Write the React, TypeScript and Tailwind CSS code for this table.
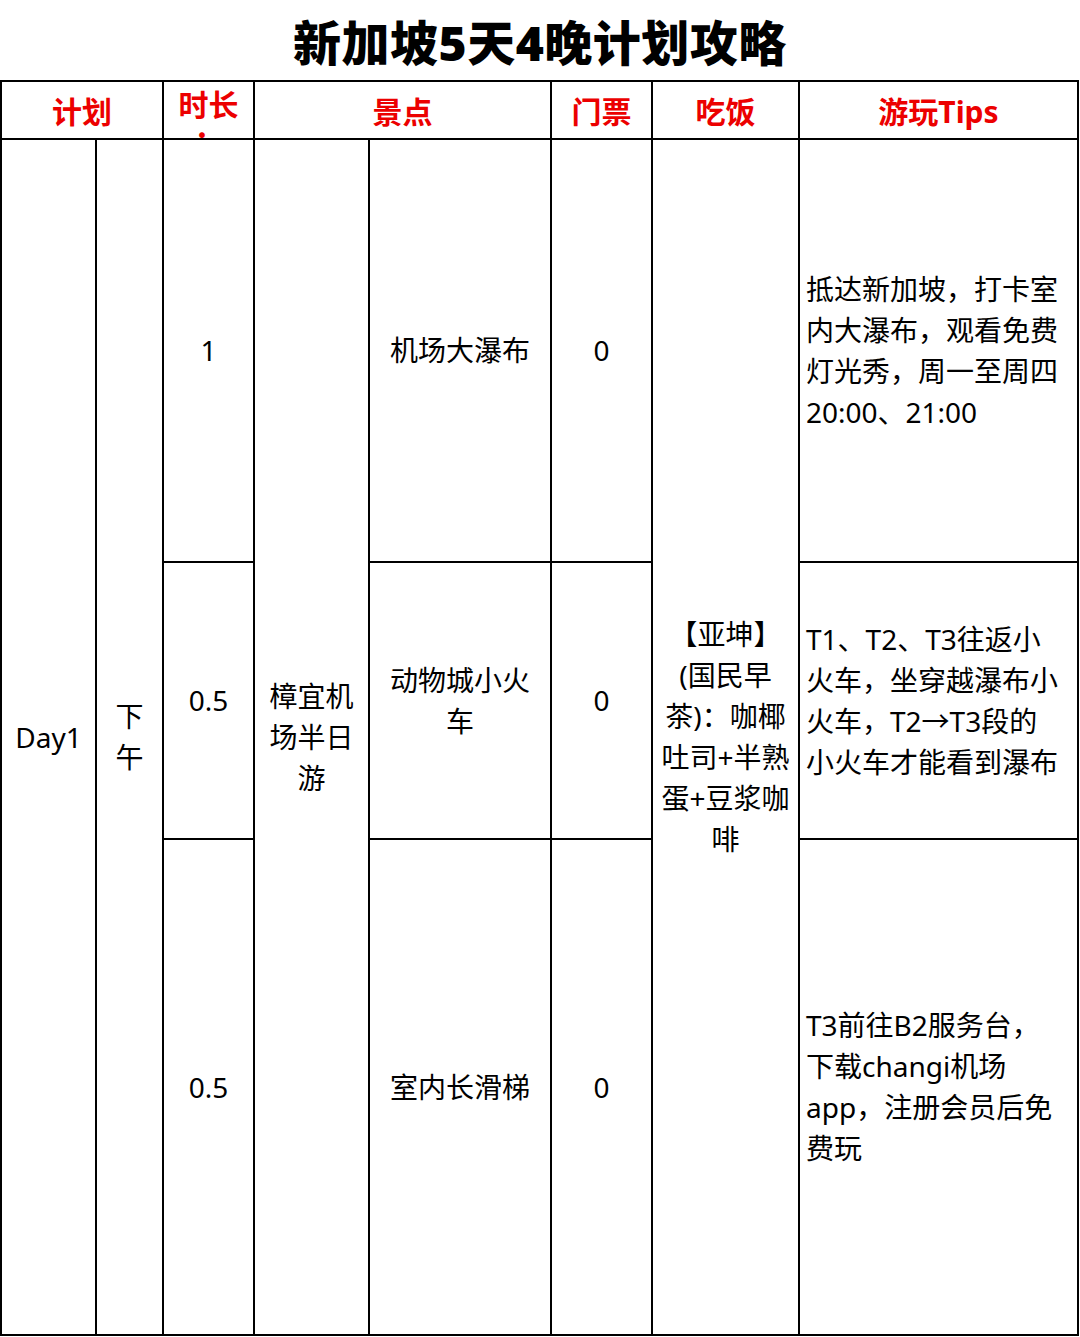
import React from 'react';

const FONT = '"Noto Sans", "Noto Sans CJK SC", sans-serif';

type CellProps = {
  className?: string;
  lines: string[];
  align?: 'center' | 'left';
};

function Cell({ className = '', lines, align = 'center' }: CellProps) {
  return (
    <div
      className={
        'bg-white flex items-center text-[28px] leading-[41px] text-black whitespace-nowrap overflow-hidden ' +
        (align === 'left' ? 'justify-start pl-[6px] text-left ' : 'justify-center text-center ') +
        className
      }
    >
      <div>
        {lines.map((l, i) => (
          <div key={i}>{l}</div>
        ))}
      </div>
    </div>
  );
}

function Head({ className = '', text }: { className?: string; text: string }) {
  return (
    <div
      className={
        'bg-white flex items-center justify-center text-[30px] font-bold text-[#ec0000] pt-[2px] ' + className
      }
    >
      {text}
    </div>
  );
}

export default function App() {
  return (
    <div className="w-[1080px] h-[1337px] bg-white overflow-hidden" style={{ fontFamily: FONT }}>
      <div className="h-[80px] flex items-center justify-center pt-[6px]">
        <h1 className="text-[48px] font-black text-black tracking-[0.5px]">新加坡5天4晚计划攻略</h1>
      </div>

      <div className="w-[1079px] bg-black p-[2px] grid gap-[2px] grid-cols-[93px_65px_89px_113px_180px_99px_145px_277px] grid-rows-[56px_421px_275px_494px]">
        {/* header */}
        <Head className="col-start-1 col-span-2 row-start-1" text="计划" />
        <div className="col-start-3 row-start-1 bg-white overflow-hidden flex justify-center pt-[5px]">
          <div className="text-[30px] font-bold text-[#ec0000] leading-[36px] text-center">
            <div>时长</div>
            <div className="pl-[2px]">：</div>
          </div>
        </div>
        <Head className="col-start-4 col-span-2 row-start-1" text="景点" />
        <Head className="col-start-6 row-start-1" text="门票" />
        <Head className="col-start-7 row-start-1" text="吃饭" />
        <Head className="col-start-8 row-start-1" text="游玩Tips" />

        {/* spanning cells */}
        <Cell className="col-start-1 row-start-2 row-span-3" lines={['Day1']} />
        <Cell className="col-start-2 row-start-2 row-span-3" lines={['下', '午']} />
        <Cell className="col-start-4 row-start-2 row-span-3" lines={['樟宜机', '场半日', '游']} />
        <Cell
          className="col-start-7 row-start-2 row-span-3"
          lines={['【亚坤】', '(国民早', '茶)：咖椰', '吐司+半熟', '蛋+豆浆咖', '啡']}
        />

        {/* row 1 */}
        <Cell className="col-start-3 row-start-2" lines={['1']} />
        <Cell className="col-start-5 row-start-2" lines={['机场大瀑布']} />
        <Cell className="col-start-6 row-start-2" lines={['0']} />
        <Cell
          className="col-start-8 row-start-2"
          align="left"
          lines={['抵达新加坡，打卡室', '内大瀑布，观看免费', '灯光秀，周一至周四', '20:00、21:00']}
        />

        {/* row 2 */}
        <Cell className="col-start-3 row-start-3" lines={['0.5']} />
        <Cell className="col-start-5 row-start-3" lines={['动物城小火', '车']} />
        <Cell className="col-start-6 row-start-3" lines={['0']} />
        <Cell
          className="col-start-8 row-start-3"
          align="left"
          lines={['T1、T2、T3往返小', '火车，坐穿越瀑布小', '火车，T2→T3段的', '小火车才能看到瀑布']}
        />

        {/* row 3 */}
        <Cell className="col-start-3 row-start-4" lines={['0.5']} />
        <Cell className="col-start-5 row-start-4" lines={['室内长滑梯']} />
        <Cell className="col-start-6 row-start-4" lines={['0']} />
        <Cell
          className="col-start-8 row-start-4"
          align="left"
          lines={['T3前往B2服务台，', '下载changi机场', 'app，注册会员后免', '费玩']}
        />
      </div>
    </div>
  );
}
